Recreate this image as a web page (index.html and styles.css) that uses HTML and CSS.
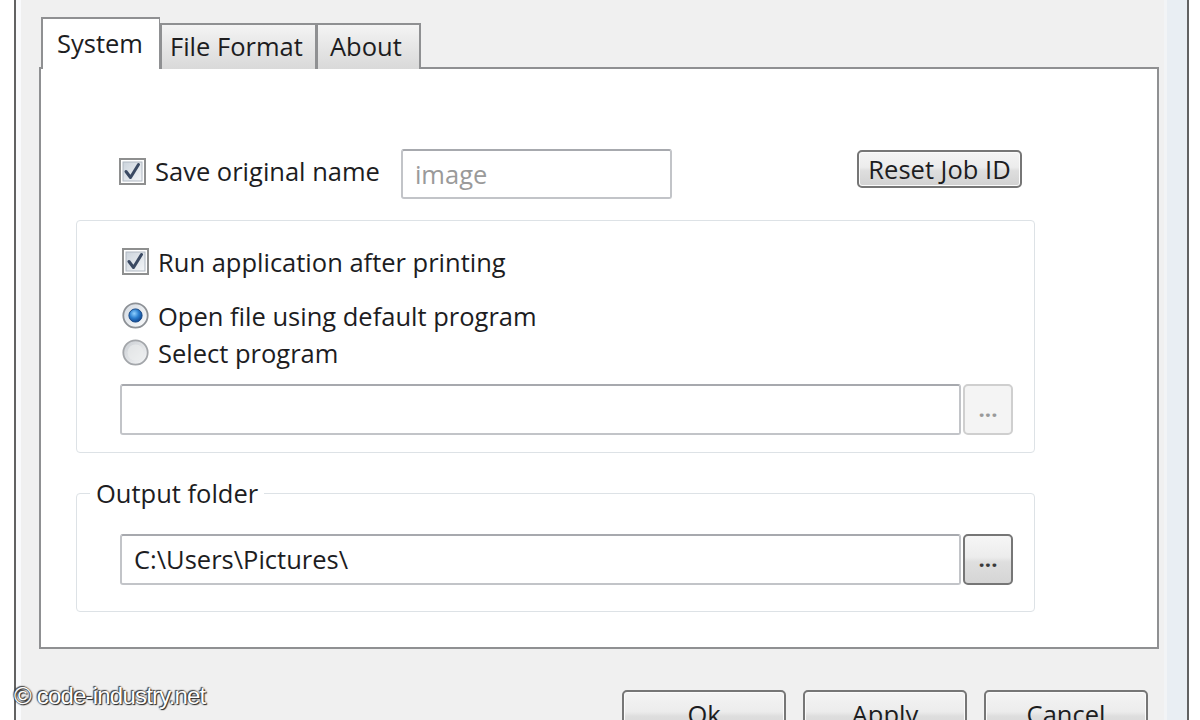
FILE: index.html
```html
<!DOCTYPE html>
<html>
<head>
<meta charset="utf-8">
<link rel="stylesheet" href="styles.css">
</head>
<body>
<div class="frame">
  <div class="tabs">
    <div class="tab tab-active">System</div>
    <div class="tab tab-ff">File Format</div>
    <div class="tab tab-about">About</div>
  </div>
  <div class="panel">
    <div class="content">
      <div class="row-top">
        <label class="check">
          <svg class="box" viewBox="0 0 27 27" width="27" height="27">
            <defs>
              <linearGradient id="cg1" x1="0" y1="0" x2="1" y2="1">
                <stop offset="0" stop-color="#cbd3dc"/>
                <stop offset="1" stop-color="#f4f6f8"/>
              </linearGradient>
            </defs>
            <rect x="1" y="1" width="25" height="25" fill="#fff" stroke="#8e8f8f" stroke-width="2"/>
            <rect x="4" y="4" width="19" height="19" fill="url(#cg1)" stroke="#b0b8c2" stroke-width="1"/>
            <path d="M7 13.5 L11.5 19.5 L19.5 6.5" fill="none" stroke="#3b4a63" stroke-width="3" stroke-linejoin="round" stroke-linecap="round"/>
          </svg>
          <span>Save original name</span>
        </label>
        <div class="textbox name-box">image</div>
        <div class="btn reset">Reset Job ID</div>
      </div>

      <div class="group group-run">
        <label class="check">
          <svg class="box" viewBox="0 0 27 27" width="27" height="27">
            <defs>
              <linearGradient id="cg2" x1="0" y1="0" x2="1" y2="1">
                <stop offset="0" stop-color="#cbd3dc"/>
                <stop offset="1" stop-color="#f4f6f8"/>
              </linearGradient>
            </defs>
            <rect x="1" y="1" width="25" height="25" fill="#fff" stroke="#8e8f8f" stroke-width="2"/>
            <rect x="4" y="4" width="19" height="19" fill="url(#cg2)" stroke="#b0b8c2" stroke-width="1"/>
            <path d="M7 13.5 L11.5 19.5 L19.5 6.5" fill="none" stroke="#3b4a63" stroke-width="3" stroke-linejoin="round" stroke-linecap="round"/>
          </svg>
          <span>Run application after printing</span>
        </label>
        <label class="check radio-first">
          <svg class="box" viewBox="0 0 27 27" width="27" height="27">
            <defs>
              <radialGradient id="rg1" cx="0.4" cy="0.35" r="0.7">
                <stop offset="0" stop-color="#8fd0ff"/>
                <stop offset="0.5" stop-color="#2b7fd0"/>
                <stop offset="1" stop-color="#0e3f86"/>
              </radialGradient>
              <linearGradient id="rb1" x1="0" y1="0" x2="1" y2="1">
                <stop offset="0" stop-color="#d3d9e0"/>
                <stop offset="1" stop-color="#fbfcfd"/>
              </linearGradient>
            </defs>
            <circle cx="13.5" cy="13.5" r="12.2" fill="url(#rb1)" stroke="#8d9196" stroke-width="1.8"/>
            <circle cx="13.5" cy="13.5" r="6.6" fill="url(#rg1)" stroke="#1b4c8a" stroke-width="1"/>
          </svg>
          <span>Open file using default program</span>
        </label>
        <label class="check radio-second">
          <svg class="box" viewBox="0 0 27 27" width="27" height="27">
            <defs>
              <linearGradient id="rb2" x1="0" y1="0" x2="1" y2="1">
                <stop offset="0" stop-color="#c9cdd2"/>
                <stop offset="1" stop-color="#f6f7f8"/>
              </linearGradient>
            </defs>
            <circle cx="13.5" cy="13.5" r="12.2" fill="url(#rb2)" stroke="#a3a6aa" stroke-width="1.8"/>
            <circle cx="13.5" cy="13.5" r="8" fill="#eceeef" opacity="0.6"/>
          </svg>
          <span>Select program</span>
        </label>
        <div class="path-row">
          <div class="textbox path-box"></div>
          <div class="btn dots dots-off">...</div>
        </div>
      </div>

      <fieldset class="group group-out">
        <legend>Output folder</legend>
        <div class="out-inner">
          <div class="path-row">
            <div class="textbox path-box">C:\Users\Pictures\</div>
            <div class="btn dots dots-on">...</div>
          </div>
        </div>
      </fieldset>
    </div>
  </div>
  <div class="buttons">
    <div class="btn big">Ok</div>
    <div class="btn big">Apply</div>
    <div class="btn big">Cancel</div>
  </div>
  <div class="watermark">© code-industry.net</div>
</div>
</body>
</html>
```

FILE: styles.css
```css
* { box-sizing: border-box; }
html, body {
  margin: 0;
  padding: 0;
  width: 1200px;
  height: 720px;
  overflow: hidden;
  background: #ffffff;
  font-family: "Open Sans", "Noto Sans", sans-serif;
  font-size: 25.5px;
  color: #1d1d1f;
}
.frame {
  position: relative;
  margin-left: 14px;
  width: 1175px;
  height: 720px;
  border-left: 2px solid #626262;
  border-right: 2px solid #626262;
  background: #f0f0f0;
  box-shadow: inset 5px 0 0 #f9fafc, inset -20px 0 0 #e9eef3, inset -23px 0 0 #f2f4f6;
  padding-left: 23px;
  padding-top: 17px;
}
.tabs {
  display: flex;
  align-items: flex-end;
  padding-left: 2px;
  height: 52px;
  position: relative;
  z-index: 2;
}
.tab {
  border: 2px solid #8f9092;
  border-bottom: none;
  height: 46px;
  line-height: 42px;
  background: linear-gradient(#f4f4f4, #e6e6e6 50%, #d9d9d9);
}
.tab-active {
  background: #ffffff;
  height: 52px;
  width: 119px;
  padding-left: 14px;
  line-height: 48px;
  border-right: 1px solid #8f9092;
}
.tab-ff { width: 157px; padding-left: 8px; }
.tab-about { width: 104px; padding-left: 12px; border-left: 1px solid #8f9092; }
.panel {
  margin-top: -2px;
  width: 1120px;
  height: 582px;
  background: #ffffff;
  border: 2px solid #8f9092;
}
.content {
  padding-left: 35px;
  width: 994px;
}
.row-top {
  display: flex;
  align-items: center;
  height: 50px;
  margin-top: 80px;
  padding-left: 43px;
  padding-right: 13px;
}
.row-top .check { margin-top: -6px; }
.check {
  display: flex;
  align-items: center;
  gap: 9px;
  height: 27px;
  white-space: nowrap;
}
.box { flex: none; display: block; }
.textbox {
  background: #ffffff;
  border: 2px solid #c2c4c8;
  border-top-color: #a7a9ae;
  border-radius: 3px;
  height: 50px;
  line-height: 46px;
  padding-left: 12px;
  white-space: nowrap;
}
.name-box {
  margin-left: 21px;
  width: 271px;
  color: #9a9a9a;
}
.btn {
  border: 2px solid #767676;
  border-radius: 5px;
  background: linear-gradient(#f4f4f4, #ececec 45%, #dedede 55%, #d2d2d2);
  text-align: center;
  white-space: nowrap;
}
.reset {
  margin-left: auto;
  width: 165px;
  height: 38px;
  line-height: 34px;
  margin-top: -10px;
  box-shadow: inset 0 0 0 1px #fbfbfb;
}
.group {
  width: 959px;
  border: 1px solid #dde2e6;
  border-radius: 4px;
  box-shadow: inset 1px 1px 0 #ffffff;
}
.group-run {
  margin-top: 21px;
  height: 233px;
  padding: 27px 21px 0 43px;
}
.group-run .check { margin-left: 2px; }
.radio-first { margin-top: 27px; }
.radio-second { margin-top: 10px; }
.path-row {
  display: flex;
  gap: 2px;
  height: 51px;
}
.group-run .path-row { margin-top: 18px; }
.path-box {
  width: 841px;
  height: 51px;
}
.dots {
  width: 50px;
  height: 51px;
  line-height: 44px;
  font-size: 22px;
  font-weight: bold;
  letter-spacing: 0;
}
.dots-off {
  border-color: #cfcfcf;
  background: #f4f4f4;
  color: #9a9a9a;
}
.dots-on {
  color: #3a3a3a;
  background: linear-gradient(#f6f6f6, #ececec 45%, #dfdfdf 55%, #d5d5d5);
}
.group-out {
  margin: 23px 0 0 0;
  padding: 0;
  min-width: 0;
  height: 136px;
}
.group-out legend {
  margin-left: 13px;
  padding: 0 6px;
  line-height: 34px;
}
.out-inner {
  padding: 24px 21px 0 43px;
}
.buttons {
  display: flex;
  justify-content: flex-end;
  gap: 17px;
  width: 1109px;
  margin-top: 41px;
}
.big {
  width: 164px;
  height: 48px;
  line-height: 44px;
  box-shadow: inset 0 0 0 1px #fbfbfb;
}
.watermark {
  position: absolute;
  left: -2px;
  top: 682px;
  font-family: "Liberation Sans", Arial, sans-serif;
  font-size: 24px;
  letter-spacing: -0.8px;
  color: #ffffff;
  text-shadow: 0 0 2px #2a2a2a, 1px 1px 1px #222, -1px -1px 1px #444;
  z-index: 5;
}
```
